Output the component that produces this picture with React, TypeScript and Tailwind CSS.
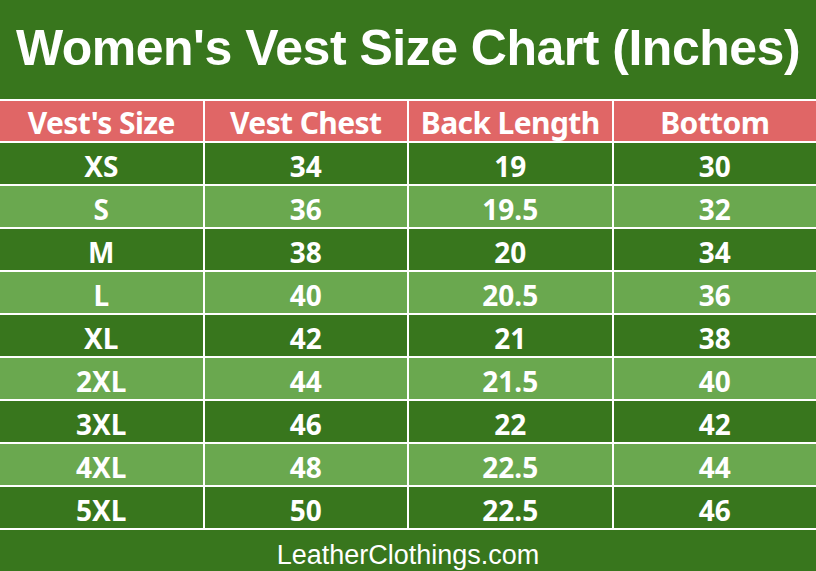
const rows = [
  ["XS", "34", "19", "30"],
  ["S", "36", "19.5", "32"],
  ["M", "38", "20", "34"],
  ["L", "40", "20.5", "36"],
  ["XL", "42", "21", "38"],
  ["2XL", "44", "21.5", "40"],
  ["3XL", "46", "22", "42"],
  ["4XL", "48", "22.5", "44"],
  ["5XL", "50", "22.5", "46"],
];

const headers = ["Vest's Size", "Vest Chest", "Back Length", "Bottom"];

export default function App() {
  return (
    <div className="w-[816px] h-[571px] bg-[#38761d] flex flex-col overflow-hidden">
      <div className="h-[99px] flex items-center justify-center">
        <h1 className="text-white font-bold text-[50px] leading-none tracking-[-0.5px] font-['Liberation_Sans',Arial,sans-serif] pb-1">
          Women's Vest Size Chart (Inches)
        </h1>
      </div>

      <div className="grid grid-cols-4 gap-[2px] bg-white py-[2px] font-['Noto_Sans',sans-serif] font-bold text-white leading-none">
        {headers.map((h) => (
          <div key={h} className="h-[40px] bg-[#e06666] flex items-center justify-center text-[30px] tracking-[-0.6px] pt-1">
            {h}
          </div>
        ))}
        {rows.map((r, i) =>
          r.map((c, j) => (
            <div
              key={i + "-" + j}
              className={
                "h-[41px] flex items-center justify-center text-[28px] pt-1 " +
                (i % 2 === 0 ? "bg-[#38761d]" : "bg-[#6aa84f]")
              }
            >
              {c}
            </div>
          ))
        )}
      </div>

      <div className="flex-1 flex items-end justify-center pb-[2px] text-white text-[27px] leading-none font-['Liberation_Sans',Arial,sans-serif]">
        LeatherClothings.com
      </div>
    </div>
  );
}
